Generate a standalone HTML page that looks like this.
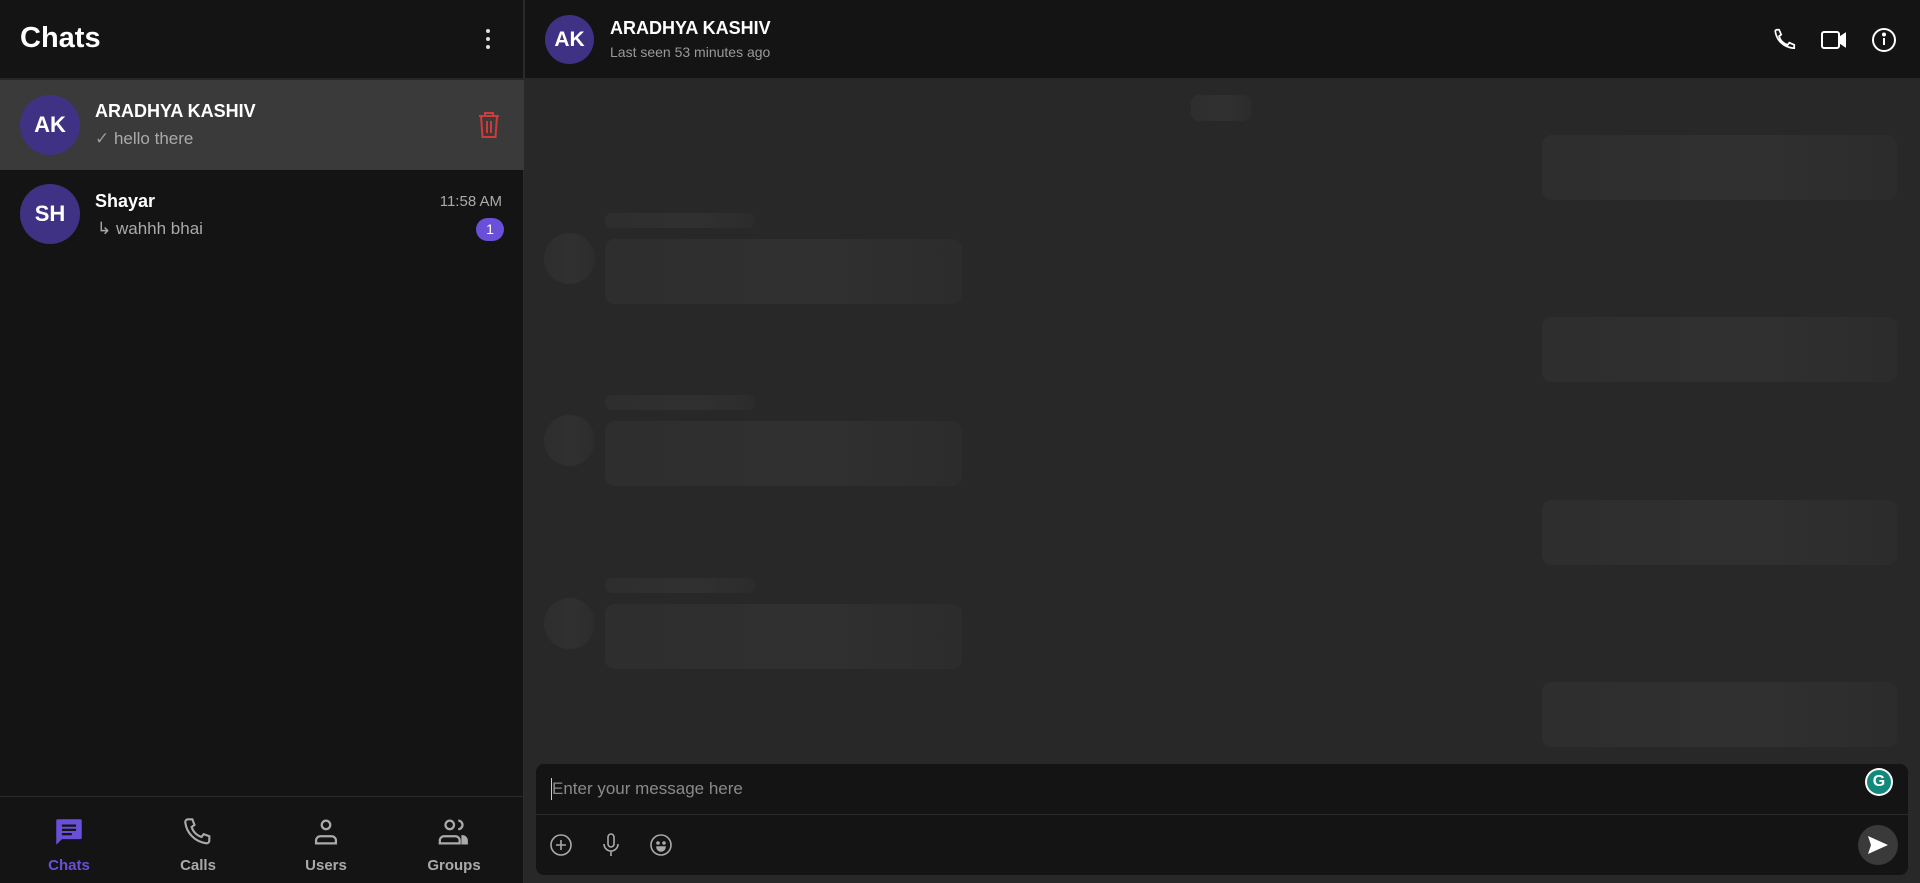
<!DOCTYPE html>
<html><head><meta charset="utf-8"><style>
*{box-sizing:border-box;margin:0;padding:0}
body{width:1920px;height:883px;background:#282828;font-family:"Liberation Sans",sans-serif;position:relative;overflow:hidden;color:#fff}
.abs{position:absolute}
.side{left:0;top:0;width:524px;height:883px;background:#141414;border-right:1px solid #2c2c2c}
.av{position:absolute;border-radius:50%;background:#3f3284;color:#fff;font-weight:bold;display:flex;align-items:center;justify-content:center}
.sk{position:absolute;background:linear-gradient(90deg,#2e2e2e,#303030 60%,#2c2c2c);border-radius:10px}
.nav{position:absolute;top:815px;width:130px;text-align:center;font-size:15px;font-weight:bold;color:#aaa}
.nav svg{display:block;margin:0 auto 8px}
</style></head><body>
<div class="abs side">
  <div class="abs" style="left:20px;top:22px;font-size:29px;font-weight:bold">Chats</div>
  <svg class="abs" style="left:478px;top:27px" width="20" height="24" viewBox="0 0 20 24"><circle cx="10" cy="4" r="2" fill="#ddd"/><circle cx="10" cy="12" r="2" fill="#ddd"/><circle cx="10" cy="20" r="2" fill="#ddd"/></svg>
  <div class="abs" style="left:0;top:78px;width:524px;height:2px;background:#262626"></div>
  <div class="abs" style="left:0;top:80px;width:524px;height:90px;background:#3a3a3a"></div>
  <div class="av" style="left:20px;top:95px;width:60px;height:60px;font-size:22px">AK</div>
  <div class="abs" style="left:95px;top:101px;font-size:18px;font-weight:bold">ARADHYA KASHIV</div>
  <div class="abs" style="left:95px;top:129px;font-size:17px;color:#aaa"><span style="color:#999">✓</span> hello there</div>
  <svg class="abs" style="left:477px;top:112px" width="24" height="27" viewBox="0 0 24 27" fill="none" stroke="#d03a3a" stroke-width="2"><path d="M2 4h20M8 4V1h8v3M4 4l1.5 21h13L20 4M10 9v12M14 9v12"/></svg>
  <div class="av" style="left:20px;top:184px;width:60px;height:60px;font-size:22px">SH</div>
  <div class="abs" style="left:95px;top:191px;font-size:18px;font-weight:bold">Shayar</div>
  <div class="abs" style="right:21px;top:193px;font-size:15px;color:#aaa">11:58 AM</div>
  <div class="abs" style="left:97px;top:219px;font-size:17px;color:#aaa">↳ wahhh bhai</div>
  <div class="abs" style="left:476px;top:218px;width:28px;height:23px;border-radius:12px;background:#6a4fd8;font-size:14px;text-align:center;line-height:23px">1</div>
  <div class="abs" style="left:0;top:796px;width:524px;height:1px;background:#2a2a2a"></div>
  <div class="nav" style="left:4px;color:#6a4fd8"><svg width="34" height="34" viewBox="0 0 24 24"><path d="M4 3h16a1 1 0 0 1 1 1v12a1 1 0 0 1-1 1H7l-4 4V4a1 1 0 0 1 1-1z" fill="#6a4fd8"/><path d="M7 7.5h10M7 10.5h10M7 13.5h7" stroke="#141414" stroke-width="1.6"/></svg>Chats</div>
  <div class="nav" style="left:133px"><svg width="34" height="34" viewBox="0 0 24 24" fill="none" stroke="#aaa" stroke-width="1.5"><path d="M5 3l3 0 1.5 4-2 1.5a11 11 0 0 0 7 7l1.5-2 4 1.5v3a2 2 0 0 1-2 2A17 17 0 0 1 3 5a2 2 0 0 1 2-2z"/></svg>Calls</div>
  <div class="nav" style="left:261px"><svg width="34" height="34" viewBox="0 0 24 24" fill="none" stroke="#aaa" stroke-width="1.6"><circle cx="12" cy="7" r="3"/><path d="M5 20v-2a3 3 0 0 1 3-3h8a3 3 0 0 1 3 3v2z"/></svg>Users</div>
  <div class="nav" style="left:389px"><svg width="34" height="34" viewBox="0 0 24 24" fill="none" stroke="#aaa" stroke-width="1.6"><circle cx="9" cy="7" r="3"/><path d="M2 20v-2a3 3 0 0 1 3-3h8a3 3 0 0 1 3 3v2z"/><path d="M15 4a3 3 0 0 1 0 6" /><path d="M18 15a3 3 0 0 1 3 3v2h-3z" fill="#aaa"/></svg>Groups</div>
</div>
<div class="abs" style="left:525px;top:0;width:1395px;height:78px;background:#141414"></div>
<div class="av" style="left:545px;top:15px;width:49px;height:49px;font-size:21px">AK</div>
<div class="abs" style="left:610px;top:18px;font-size:18px;font-weight:bold">ARADHYA KASHIV</div>
<div class="abs" style="left:610px;top:44px;font-size:14px;color:#999">Last seen 53 minutes ago</div>
<svg class="abs" style="left:1772px;top:27px" width="26" height="26" viewBox="0 0 24 24" fill="none" stroke="#fff" stroke-width="1.6"><path d="M4 2.5h2.5l2 4.5-2 1.5a12 12 0 0 0 8 8l1.5-2 4.5 2v3h-1A18 18 0 0 1 3 3.5z"/></svg>
<svg class="abs" style="left:1820px;top:27px" width="28" height="26" viewBox="0 0 28 26" fill="none" stroke="#fff" stroke-width="2"><rect x="2" y="5" width="17" height="16" rx="2"/><path d="M19 11l6-4v12l-6-4z" fill="#fff"/></svg>
<svg class="abs" style="left:1871px;top:27px" width="26" height="26" viewBox="0 0 26 26" fill="none" stroke="#fff" stroke-width="2"><circle cx="13" cy="13" r="11"/><path d="M13 11v7"/><circle cx="13" cy="7.5" r="1" fill="#fff"/></svg>
<div class="sk" style="left:1191px;top:95px;width:60px;height:26px;border-radius:8px"></div>
<div class="sk" style="left:1542px;top:135px;width:355px;height:65px"></div>
<div class="sk" style="left:1542px;top:317px;width:355px;height:65px"></div>
<div class="sk" style="left:1542px;top:500px;width:355px;height:65px"></div>
<div class="sk" style="left:1542px;top:682px;width:355px;height:65px"></div>
<div class="sk" style="left:605px;top:213px;width:150px;height:15px;border-radius:8px"></div>
<div class="sk" style="left:544px;top:233px;width:51px;height:51px;border-radius:50%"></div>
<div class="sk" style="left:605px;top:239px;width:357px;height:65px"></div>
<div class="sk" style="left:605px;top:395px;width:150px;height:15px;border-radius:8px"></div>
<div class="sk" style="left:544px;top:415px;width:51px;height:51px;border-radius:50%"></div>
<div class="sk" style="left:605px;top:421px;width:357px;height:65px"></div>
<div class="sk" style="left:605px;top:578px;width:150px;height:15px;border-radius:8px"></div>
<div class="sk" style="left:544px;top:598px;width:51px;height:51px;border-radius:50%"></div>
<div class="sk" style="left:605px;top:604px;width:357px;height:65px"></div>
<div class="abs" style="left:536px;top:764px;width:1372px;height:111px;background:#141414;border-radius:8px"></div>
<div class="abs" style="left:536px;top:814px;width:1372px;height:1px;background:#2a2a2a"></div>
<div class="abs" style="left:551px;top:778px;width:1px;height:22px;background:#ccc"></div>
<div class="abs" style="left:552px;top:779px;font-size:17px;color:#8a8a8a">Enter your message here</div>
<div class="abs" style="left:1865px;top:768px;width:28px;height:28px;border-radius:50%;background:#fff"></div>
<div class="abs" style="left:1867px;top:770px;width:24px;height:24px;border-radius:50%;background:#12897a;color:#fff;font-weight:bold;font-size:16px;text-align:center;line-height:24px">G</div>
<svg class="abs" style="left:549px;top:833px" width="24" height="24" viewBox="0 0 24 24" fill="none" stroke="#aaa" stroke-width="1.6"><circle cx="12" cy="12" r="10"/><path d="M12 7v10M7 12h10"/></svg>
<svg class="abs" style="left:599px;top:832px" width="24" height="26" viewBox="0 0 24 26" fill="none" stroke="#aaa" stroke-width="1.6"><rect x="9" y="2" width="6" height="13" rx="3"/><path d="M5 12a7 7 0 0 0 14 0M12 19v5"/></svg>
<svg class="abs" style="left:649px;top:833px" width="24" height="24" viewBox="0 0 24 24" fill="none" stroke="#aaa" stroke-width="1.6"><circle cx="12" cy="12" r="10"/><circle cx="9" cy="10" r="1" fill="#aaa"/><circle cx="15" cy="10" r="1" fill="#aaa"/><path d="M8 14h8a4 4 0 0 1-8 0z" fill="#aaa"/></svg>
<div class="abs" style="left:1858px;top:825px;width:40px;height:40px;border-radius:50%;background:#3a3a3a"></div>
<svg class="abs" style="left:1867px;top:835px" width="22" height="20" viewBox="0 0 22 20"><path d="M1 1l20 9-20 9 3-9z" fill="#fff"/></svg>
</body></html>
